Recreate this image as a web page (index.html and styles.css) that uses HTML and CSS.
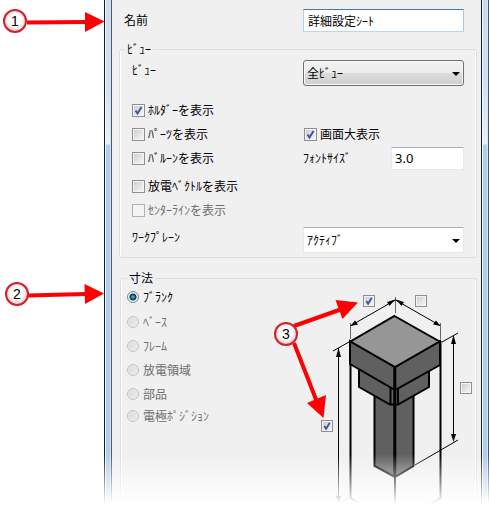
FILE: index.html
```html
<!DOCTYPE html>
<html lang="ja">
<head>
    <meta charset="UTF-8">
    <meta name="viewport" content="width=device-width, initial-scale=1.0">
    <title>詳細設定シート</title>
    <link rel="stylesheet" href="styles.css">
</head>
<body>
    <div class="page">
        <form class="window">
            <div class="frame"></div>
            <div class="panel">
                <div class="row name">
                    <label for="name">名前</label>
                    <input type="text" class="text focused" id="name" value="詳細設定ｼｰﾄ">
                </div>

                <fieldset class="view">
                    <legend>ﾋﾞｭｰ</legend>
                    <div class="row tall">
                        <label for="view">ﾋﾞｭｰ</label>
                        <div class="select button">
                            <select id="view"><option>全ﾋﾞｭｰ</option></select>
                        </div>
                    </div>
                    <div class="row first">
                        <label class="check"><input type="checkbox" checked>ﾎﾙﾀﾞｰを表示</label>
                    </div>
                    <div class="row">
                        <label class="check"><input type="checkbox">ﾊﾟｰﾂを表示</label>
                        <label class="check second"><input type="checkbox" checked>画面大表示</label>
                    </div>
                    <div class="row">
                        <label class="check"><input type="checkbox">ﾊﾞﾙｰﾝを表示</label>
                        <div class="size">
                            <label for="size">ﾌｫﾝﾄｻｲｽﾞ</label>
                            <input type="text" class="text" id="size" value="3.0">
                        </div>
                    </div>
                    <div class="row spaced">
                        <label class="check"><input type="checkbox">放電ﾍﾞｸﾄﾙを表示</label>
                    </div>
                    <div class="row">
                        <label class="check disabled"><input type="checkbox" disabled>ｾﾝﾀｰﾗｲﾝを表示</label>
                    </div>
                    <div class="row tall last">
                        <label for="plane">ﾜｰｸﾌﾟﾚｰﾝ</label>
                        <div class="select">
                            <select id="plane"><option>ｱｸﾃｨﾌﾞ</option></select>
                        </div>
                    </div>
                </fieldset>

                <fieldset class="dimension">
                    <legend>寸法</legend>
                    <div class="columns">
                        <div class="radios">
                            <label><input type="radio" name="part" checked>ﾌﾞﾗﾝｸ</label>
                            <label class="disabled"><input type="radio" name="part" disabled>ﾍﾞｰｽ</label>
                            <label class="disabled"><input type="radio" name="part" disabled>ﾌﾚｰﾑ</label>
                            <label class="disabled"><input type="radio" name="part" disabled>放電領域</label>
                            <label class="disabled"><input type="radio" name="part" disabled>部品</label>
                            <label class="disabled"><input type="radio" name="part" disabled>電極ﾎﾟｼﾞｼｮﾝ</label>
                        </div>
                        <div class="diagram">
                            <svg viewBox="313 287 163 219" width="163" height="219" fill="none" stroke="#000" aria-hidden="true">
                                <!-- blank outline -->
                                <path d="M350.5 341V498L395 524L440.5 498V341M395 470V506" stroke-width="2"/>
                                <!-- shaft -->
                                <path d="M374.5 394V466L395 477L413.5 466V394Z" fill="#606060" stroke-width="2"/>
                                <!-- holder -->
                                <path d="M359 366V387L390 404.5H398L429 387V366L395 385Z" fill="#606060" stroke-width="2"/>
                                <path d="M390.5 388V404M398 388V404" stroke-width="2"/>
                                <!-- head -->
                                <path d="M350 341L395 367V390L350 364Z" fill="#606060" stroke-width="2"/>
                                <path d="M440 341L395 367V390L440 365Z" fill="#606060" stroke-width="2"/>
                                <path d="M394.5 316L439.5 341.5L395 367L350.5 341.5Z" fill="#969696" stroke-width="2"/>
                                <path d="M394.8 367V476" stroke-width="3"/>
                                <!-- dimension lines -->
                                <path d="M395.5 297V313M350.5 323V339M440.5 323V339" stroke="#666"/>
                                <path d="M351 325.5L395.5 300L440 325.5"/>
                                <path d="M333 351L349 342M338.5 348V503M340 503L348 498"/>
                                <path d="M442 342L458 333M453.5 336V440M415 465L458 440"/>
                                <g fill="#000" stroke="none">
                                    <path d="M350.5 326L355 320.500L358 324.5ZM440.5 326L436 320.500L433 324.5Z"/>
                                    <path d="M395 299.5L387 302L389.500 306ZM396 299.5L404 302L401.500 306Z"/>
                                    <path d="M338.5 348L336 357H341ZM338.5 504L336 496H341Z"/>
                                    <path d="M453.5 335L451 344H456ZM453.5 442L451 434H456Z"/>
                                </g>
                            </svg>
                            <input type="checkbox" class="depth" aria-label="奥行き" checked>
                            <input type="checkbox" class="width" aria-label="幅">
                            <input type="checkbox" class="inner" aria-label="内側の高さ">
                            <input type="checkbox" class="outer" aria-label="全体の高さ" checked>
                        </div>
                    </div>
                </fieldset>
            </div>
            <div class="frame"></div>
        </form>
        <div class="fade"></div>

        <svg class="callouts" width="370" height="430" viewBox="0 0 370 430">
            <defs>
                <radialGradient id="ball" cx="50%" cy="45%" r="55%">
                    <stop offset="0.5" stop-color="#fff"/>
                    <stop offset="1" stop-color="#e8c4c4"/>
                </radialGradient>
            </defs>
            <g stroke="#f00" stroke-width="4">
                <path d="M27 22.5L86 22"/>
                <path d="M28 295.5L86 294"/>
                <path d="M294 326L342 309"/>
                <path d="M294 343L317 402"/>
            </g>
            <g fill="#f00">
                <path d="M85 12L104.5 21.5L85 32Z"/>
                <path d="M84.5 284L104 293.5L85 304Z"/>
                <path d="M335.5 300L358 302.5L342.5 319Z"/>
                <path d="M307 403L326 395L323.5 418Z"/>
            </g>
            <g fill="url(#ball)" stroke="#d3202a" stroke-width="2">
                <circle cx="15" cy="21" r="11"/>
                <circle cx="17" cy="294" r="11"/>
                <circle cx="286" cy="334" r="11"/>
            </g>
            <g class="numbers">
                <text x="15" y="26">1</text>
                <text x="17" y="299">2</text>
                <text x="286" y="339">3</text>
            </g>
        </svg>
    </div>
</body>
</html>
```
FILE: styles.css
```css
* {
    box-sizing: border-box;
}
body {
    margin: 0;
    background: #fff;
    color: #000;
    font-family: "Noto Sans CJK JP", sans-serif;
    font-size: 12px;
    line-height: 16px;
}
.page {
    position: relative;
    padding-left: 104px;
}
.window {
    display: flex;
}
.frame {
    flex: none;
    width: 8px;
    border-left: 1px solid #101c28;
    border-right: 1px solid #4a5663;
    background: linear-gradient(#cadcee, #cfdff2 80px, #e8f1fa 144px, #b1cdeb 145px, #b1cdeb);
    box-shadow: inset 1px 0 #f4f9fd, inset -1px 0 #d5e6f5;
}
.panel {
    flex: 1;
    min-width: 0;
    padding: 8px 4px 0 7px;
    background: #f0f0f0;
}
.row {
    display: grid;
    grid-template-columns: 171px 1fr;
    align-items: center;
    height: 24px;
}
.row.name {
    grid-template-columns: 179px 1fr;
    padding: 0 13px 0 5px;
}
.row.tall {
    height: 26px;
    align-items: start;
    line-height: 20px;
}
.row.first {
    margin-top: 12px;
}
.row.spaced {
    margin-top: 4px;
}
.row.last {
    margin-top: 5px;
}
fieldset {
    min-width: 0;
    margin: 0;
    border: 1px solid #d5dfe5;
    border-radius: 3px;
    box-shadow: inset 1px 0 #fff, inset -1px 0 #fff;
}
.view {
    margin-top: 9px;
    padding: 3px 12px 4px;
}
.dimension {
    margin: 12px 0 0 1px;
    padding: 0;
    border-bottom: 0;
    border-radius: 3px 3px 0 0;
}
legend {
    margin-left: -7px;
    padding: 0 2px;
}
.dimension legend {
    margin-left: 6px;
}
input,
select {
    margin: 0;
    color: inherit;
    font: inherit;
}
.text {
    width: 100%;
    height: 23px;
    padding: 0 4px;
    border: 1px solid #e3e9ef;
    border-top-color: #abadb3;
    border-radius: 1px;
    background: #fff;
    outline: none;
}
.text.focused {
    border-color: #3d7bad #a4c9e3 #b7d9ed #b5cfe7;
}
.size {
    display: flex;
    align-items: center;
    justify-content: space-between;
}
.size .text {
    width: 73px;
    padding: 0 3px;
    font-family: "Noto Sans", sans-serif;
    font-size: 13px;
}
.select {
    position: relative;
}
.select select {
    display: block;
    width: 100%;
    height: 26px;
    padding: 0 20px 0 3px;
    appearance: none;
    border: 1px solid #e3e9ef;
    border-top-color: #abadb3;
    border-radius: 1px;
    background: #fff;
}
.select.button select {
    border-color: #707070;
    border-radius: 3px;
    background: linear-gradient(#f2f2f2, #ebebeb 50%, #dddddd 50%, #cfcfcf);
    box-shadow: inset 0 0 0 1px #f8f8f8;
}
.select::after {
    content: "";
    position: absolute;
    right: 4px;
    top: 12px;
    border: 4px solid transparent;
    border-top-color: #000;
    border-bottom: 0;
    pointer-events: none;
}
.check,
.radios label {
    display: flex;
    align-items: center;
    gap: 3px;
}
.check.second {
    padding-left: 1px;
}
.disabled {
    color: #6d6d6d;
}
input[type="checkbox"] {
    flex: none;
    width: 13px;
    height: 13px;
    appearance: none;
    border: 1px solid #8e8f8f;
    background: linear-gradient(135deg, #cbcfd5, #f6f6f6) center / 9px 9px no-repeat #f4f4f4;
}
input[type="checkbox"]:checked {
    background:
        url("data:image/svg+xml,%3Csvg xmlns='http://www.w3.org/2000/svg' viewBox='0 0 11 11'%3E%3Cpath d='M2.5 5.5L4.500 8.5L8.5 2' fill='none' stroke='%233c54a0' stroke-width='2'/%3E%3C/svg%3E") center / 11px 11px no-repeat,
        linear-gradient(135deg, #cbcfd5, #f6f6f6) center / 9px 9px no-repeat #f4f4f4;
}
input[type="checkbox"]:disabled {
    border-color: #b1b1b1;
    background: #f4f4f4;
}
input[type="radio"] {
    flex: none;
    width: 12px;
    height: 12px;
    appearance: none;
    border: 1px solid #8e8f8f;
    border-radius: 50%;
}
input[type="radio"]:checked {
    border-color: #7d848b;
    background: radial-gradient(circle, #5cc0ea, #17628f 2px, #0b2f4a 3px, #eef1f4 4px);
}
input[type="radio"]:disabled {
    border-color: #c0c0c0;
    background: radial-gradient(circle at 4px 4px, #dcdcdc, #f4f4f4);
}
.columns {
    display: flex;
    justify-content: space-between;
    padding-top: 1px;
}
.radios {
    padding-left: 6px;
}
.radios label {
    gap: 4px;
    height: 24px;
}
.radios label:first-child {
    height: 20px;
    margin-bottom: 3px;
}
.radios label:last-child {
    height: 20px;
}
/* checkboxes are pinned on the drawing next to their dimension lines */
.diagram {
    position: relative;
    height: 219px;
}
.diagram svg {
    display: block;
}
.diagram input[type="checkbox"] {
    position: absolute;
    width: 12px;
    height: 12px;
    background-size: 8px 8px;
}
.diagram input[type="checkbox"]:checked {
    background-size: 10px 10px, 8px 8px;
}
.diagram .depth {
    left: 50px;
    top: 8px;
}
.diagram .width {
    left: 102px;
    top: 8px;
}
.diagram .inner {
    left: 147px;
    top: 95px;
}
.diagram .outer {
    left: 8px;
    top: 133px;
}
.fade {
    position: absolute;
    left: 0;
    right: 0;
    bottom: 0;
    height: 52px;
    background: linear-gradient(rgba(255, 255, 255, 0), #fff 50px);
    pointer-events: none;
}
.callouts {
    position: absolute;
    left: 0;
    top: 0;
    pointer-events: none;
}
.numbers {
    fill: #000;
    font-family: "Liberation Sans", Arial, sans-serif;
    font-size: 14px;
    text-anchor: middle;
}
```
